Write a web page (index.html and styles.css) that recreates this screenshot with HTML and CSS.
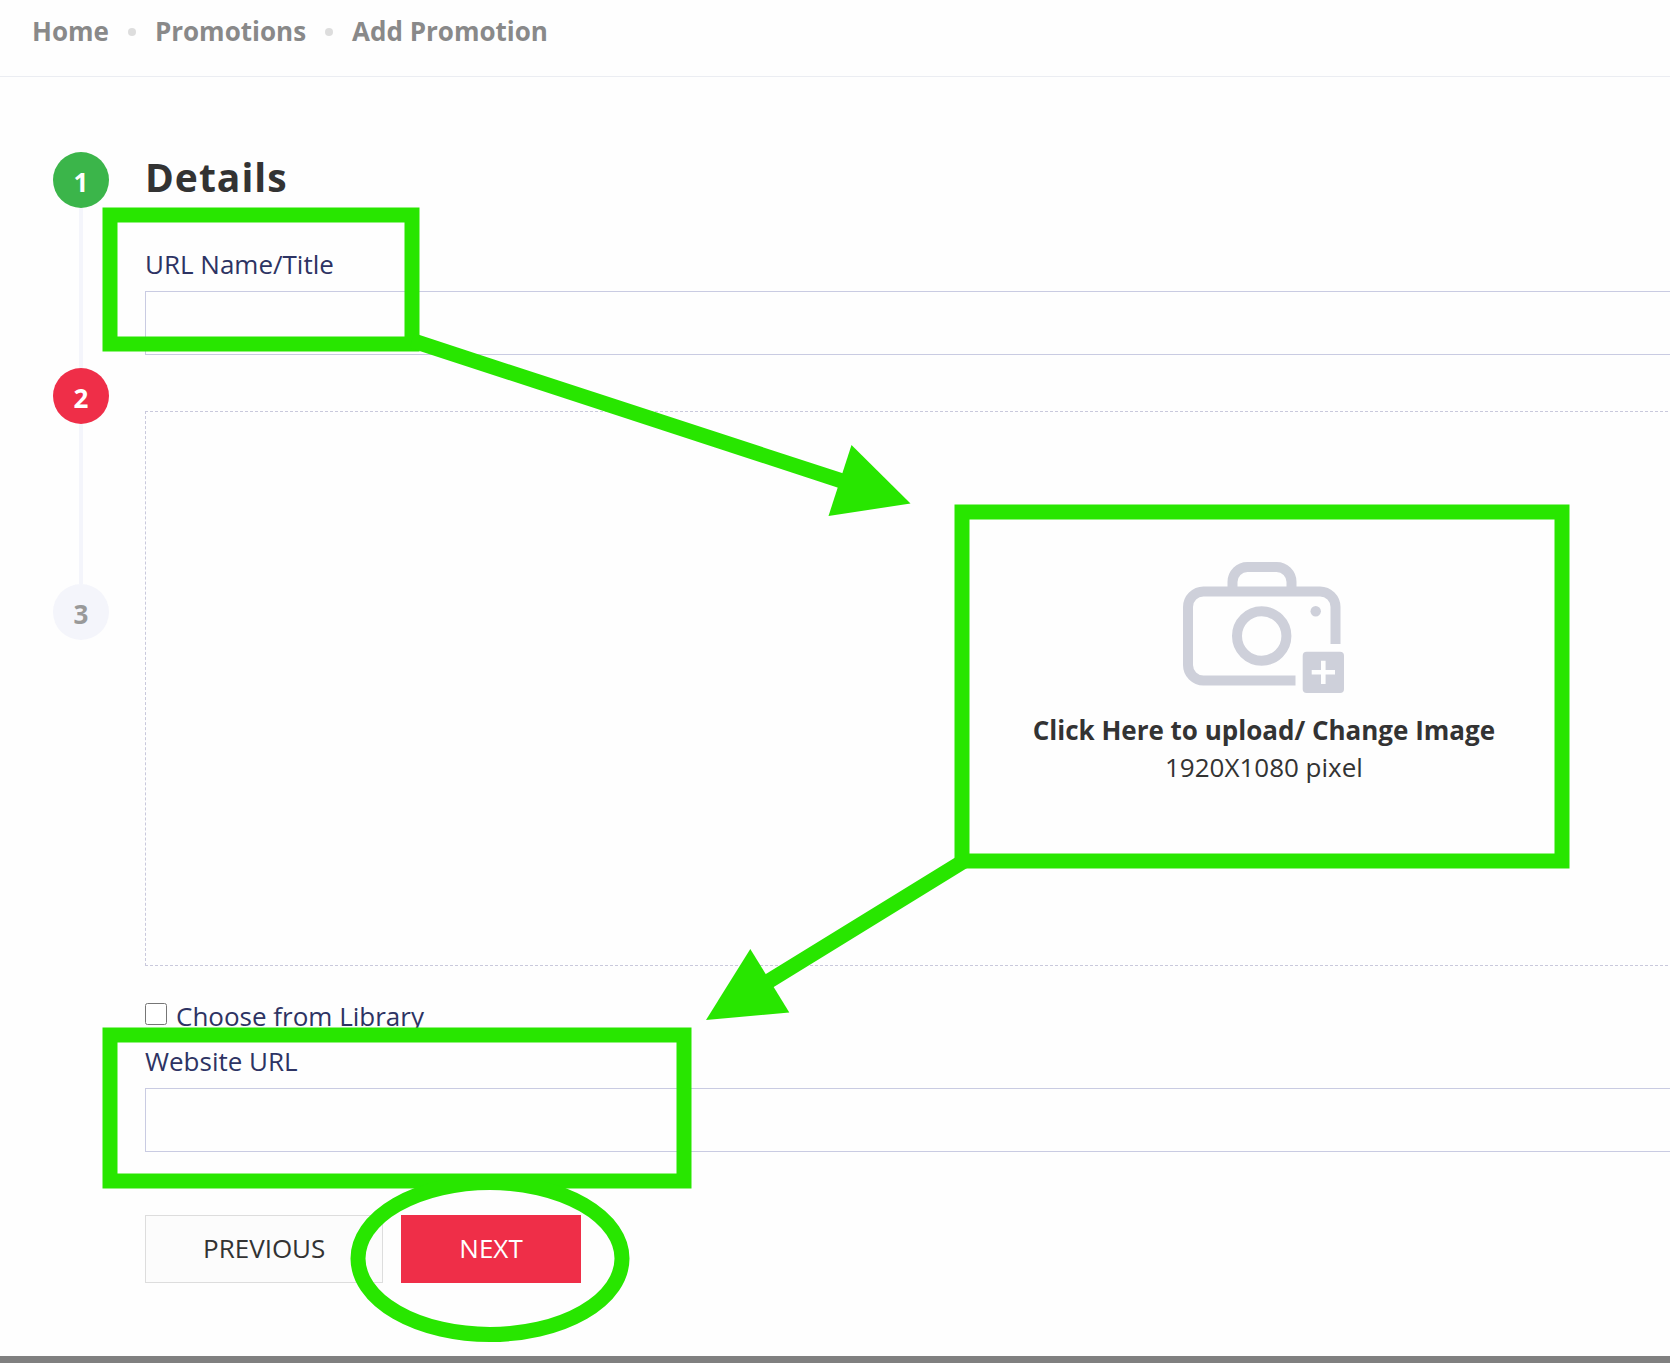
FILE: index.html
```html
<!DOCTYPE html>
<html lang="en">
<head>
    <meta charset="UTF-8">
    <meta name="viewport" content="width=device-width, initial-scale=1.0">
    <title>Add Promotion</title>
    <link rel="stylesheet" href="styles.css">
</head>
<body>
    <nav class="breadcrumb">
        <a href="#">Home</a>
        <span class="dot"></span>
        <a href="#">Promotions</a>
        <span class="dot"></span>
        <a href="#">Add Promotion</a>
    </nav>

    <main class="wizard">
        <div class="steps">
            <div class="step done">1</div>
            <div class="step-line"></div>
            <div class="step active">2</div>
            <div class="step-line"></div>
            <div class="step">3</div>
        </div>

        <form class="details">
            <h1>Details</h1>

            <div class="field">
                <label for="url-name">URL Name/Title</label>
                <input type="text" id="url-name">
            </div>

            <button type="button" class="upload">
                <svg class="camera" viewBox="0 0 161 131" fill="none" stroke="#ced0da" stroke-width="10">
                    <path d="M152.500 82V45a15.500 15.500 0 0 0-15.500-15.500H20.500A15.500 15.500 0 0 0 5 45v58a15.500 15.500 0 0 0 15.500 15.500h92"/>
                    <path d="M49.500 26v-6a15 15 0 0 1 15-15h29a15 15 0 0 1 15 15v6"/>
                    <circle cx="78.700" cy="74" r="24.700"/>
                    <circle cx="132.700" cy="49.300" r="5.200" fill="#ced0da" stroke="none"/>
                    <rect x="119.700" y="89.700" width="41.300" height="41.300" rx="4" fill="#ced0da" stroke="none"/>
                    <path d="M140.300 98.700v23.300M128.700 110.300h23.300" stroke="#fefefe" stroke-width="4.600"/>
                </svg>
                <strong>Click Here to upload/ Change Image</strong>
                <span>1920X1080 pixel</span>
            </button>

            <div class="library">
                <input type="checkbox" id="library">
                <label for="library">Choose from Library</label>
            </div>

            <div class="field">
                <label for="website-url">Website URL</label>
                <input type="text" id="website-url">
            </div>

            <div class="actions">
                <button type="button" class="btn">PREVIOUS</button>
                <button type="button" class="btn btn-next">NEXT</button>
            </div>
        </form>
    </main>

    <footer class="page-end"></footer>

    <!-- Walkthrough markers drawn over the form -->
    <svg class="guide" width="1670" height="1363" fill="none" stroke="#28e600" stroke-width="15">
        <rect x="110" y="215" width="302" height="129"/>
        <path d="M412 340.500L842 481"/>
        <path d="M910.500 503.500L851.500 445L828.500 516Z" fill="#28e600" stroke="none"/>
        <rect x="962" y="512" width="600" height="349"/>
        <path d="M964 861L769 981"/>
        <path d="M706 1020L750.300 949L789.300 1012.500Z" fill="#28e600" stroke="none"/>
        <rect x="110" y="1035" width="574" height="146"/>
        <ellipse cx="490" cy="1258.500" rx="132" ry="76"/>
    </svg>
</body>
</html>
```
FILE: styles.css
```css
* {
    box-sizing: border-box;
}
body {
    margin: 0;
    position: relative;
    overflow: hidden;
    background: #fefefe;
    color: #333;
    font-family: "Open Sans", sans-serif;
    font-size: 26px;
    line-height: 35px;
}
button, input {
    font: inherit;
    color: inherit;
}

/* Breadcrumb */
.breadcrumb {
    display: flex;
    align-items: center;
    gap: 19px;
    padding: 14px 32px 27px;
    border-bottom: 1px solid #ebedf2;
}
.breadcrumb a {
    color: #898989;
    font-weight: bold;
    text-decoration: none;
}
.dot {
    width: 8px;
    height: 8px;
    border-radius: 50%;
    background: #ddd;
}

/* Steps */
.wizard {
    display: flex;
    align-items: flex-start;
    gap: 36px;
    padding: 75px 0 73px 53px;
}
.steps {
    display: flex;
    flex-direction: column;
    align-items: center;
}
.step {
    width: 56px;
    height: 56px;
    padding-top: 2px;
    border-radius: 50%;
    background: #f4f5fb;
    color: #999;
    font-weight: bold;
    line-height: 56px;
    text-align: center;
}
.step.done {
    background: #3bb54a;
    color: #fff;
}
.step.active {
    background: #ef2e48;
    color: #fff;
}
.step-line {
    width: 4px;
    height: 160px;
    background: #f4f5fb;
}

/* Form, wider than the window */
.details {
    flex: none;
    width: 134vw;
}
h1 {
    margin: 0 0 45px;
    font-size: 39px;
    line-height: 50px;
    letter-spacing: 1px;
}
.field label {
    display: block;
    margin-bottom: 9px;
    color: #2d3363;
}
.field input {
    display: block;
    width: 100%;
    height: 64px;
    padding: 0 20px;
    border: 1px solid #c9cbe2;
    background: transparent;
}
.upload {
    display: flex;
    flex-direction: column;
    align-items: center;
    justify-content: center;
    width: 100%;
    height: 555px;
    margin: 56px 0 33px;
    padding: 0 0 29px;
    border: 1px dashed #c9c9dc;
    background: transparent;
    line-height: 37px;
}
.camera {
    width: 161px;
    height: 131px;
    margin-bottom: 19px;
}
.library {
    display: flex;
    gap: 9px;
    margin-bottom: 10px;
    color: #2d3363;
}
.library input {
    width: 22px;
    height: 22px;
    margin: 4px 0 0;
}
.actions {
    display: flex;
    gap: 18px;
    margin-top: 63px;
}
.btn {
    height: 68px;
    padding: 0 57px 2px;
    border: 1px solid #ddd;
    background: #fcfcfc;
}
.btn-next {
    border-color: #ef2e48;
    background: #ef2e48;
    color: #fff;
}
.page-end {
    height: 7px;
    background: #808080;
}

.guide {
    position: absolute;
    top: 0;
    left: 0;
    pointer-events: none;
}
```
